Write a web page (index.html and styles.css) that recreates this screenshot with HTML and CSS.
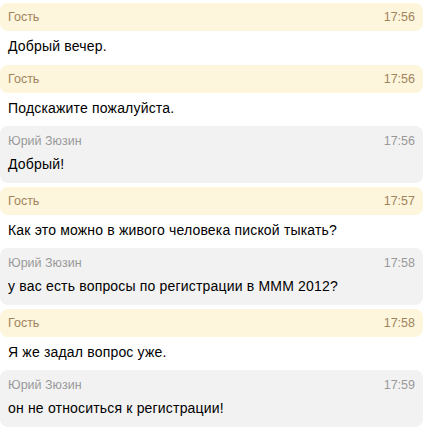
FILE: index.html
```html
<!DOCTYPE html>
<html lang="ru">
<head>
<meta charset="utf-8">
<link rel="stylesheet" href="styles.css">
</head>
<body>
<div class="chat">
  <div class="msg guest">
    <div class="head"><span class="name">Гость</span><span class="time">17:56</span></div>
    <div class="text">Добрый вечер.</div>
  </div>
  <div class="msg guest">
    <div class="head"><span class="name">Гость</span><span class="time">17:56</span></div>
    <div class="text">Подскажите пожалуйста.</div>
  </div>
  <div class="msg op">
    <div class="head"><span class="name">Юрий Зюзин</span><span class="time">17:56</span></div>
    <div class="text">Добрый!</div>
  </div>
  <div class="msg guest">
    <div class="head"><span class="name">Гость</span><span class="time">17:57</span></div>
    <div class="text">Как это можно в живого человека пиской тыкать?</div>
  </div>
  <div class="msg op">
    <div class="head"><span class="name">Юрий Зюзин</span><span class="time">17:58</span></div>
    <div class="text">у вас есть вопросы по регистрации в МММ 2012?</div>
  </div>
  <div class="msg guest">
    <div class="head"><span class="name">Гость</span><span class="time">17:58</span></div>
    <div class="text">Я же задал вопрос уже.</div>
  </div>
  <div class="msg op">
    <div class="head"><span class="name">Юрий Зюзин</span><span class="time">17:59</span></div>
    <div class="text">он не относиться к регистрации!</div>
  </div>
</div>
</body>
</html>
```
FILE: styles.css
```css
html, body {
  margin: 0;
  padding: 0;
  background: #ffffff;
}
.chat {
  display: flex;
  flex-direction: column;
  gap: 3.5px;
  padding: 3px 3px 0 0;
  font-family: "Liberation Sans", Arial, sans-serif;
}
.msg {
  border-radius: 8px;
}
.head {
  display: flex;
  justify-content: space-between;
  padding: 0 8px;
  font-size: 12.5px;
}
.text {
  padding: 0 8px;
  font-size: 14px;
  letter-spacing: 0.18px;
  color: #000;
}
.guest .head {
  background: #fdf5dc;
  border-radius: 8px;
  height: 28px;
  line-height: 28px;
  color: #a0845c;
}
.guest .text {
  line-height: 30px;
}
.op {
  background: #f2f2f2;
  padding: 6px 0 9px;
}
.op .head {
  line-height: 18px;
  color: #999999;
}
.op .text {
  margin-top: 4px;
  line-height: 20px;
}
```
